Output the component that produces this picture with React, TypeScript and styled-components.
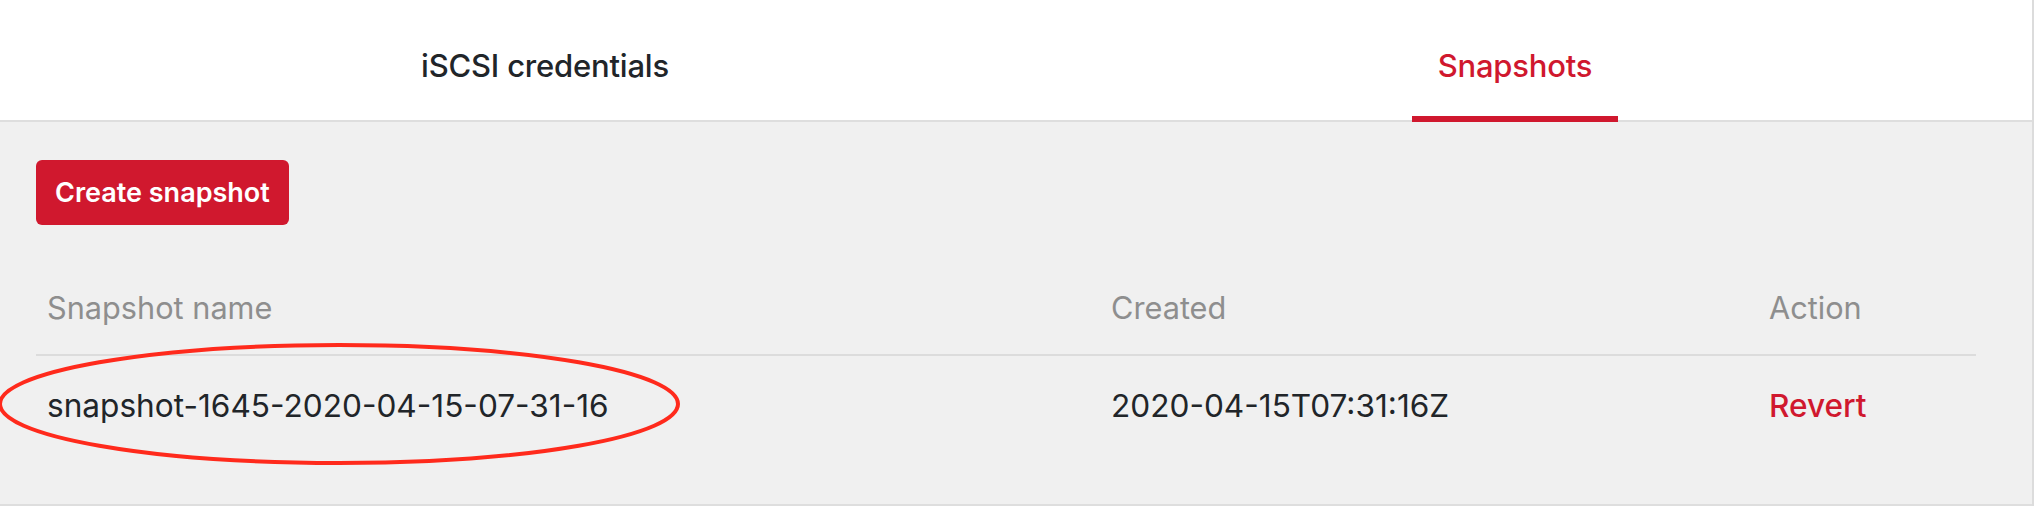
import React from 'react';
import styled, { createGlobalStyle } from 'styled-components';

const GlobalStyle = createGlobalStyle`
  html, body {
    margin: 0;
    padding: 0;
    background: #ffffff;
  }
  body {
    font-family: Inter, "Noto Sans", "Liberation Sans", sans-serif;
    color: #212529;
  }
  * {
    box-sizing: border-box;
  }
`;

const Frame = styled.div`
  width: 2034px;
  border-right: 2px solid #dcdcdc;
`;

const TabBar = styled.nav`
  display: flex;
  height: 122px;
  padding: 0 32px 0 60px;
  border-bottom: 2px solid #dedede;
  background: #ffffff;
`;

const TabCell = styled.div`
  flex: 1;
  display: flex;
  justify-content: center;
`;

const TabLabel = styled.a<{ $active?: boolean }>`
  display: flex;
  align-items: center;
  height: 122px;
  padding: 14px 26px 0;
  margin-bottom: -2px;
  font-size: 31px;
  font-weight: 500;
  letter-spacing: -0.2px;
  color: ${({ $active }) => ($active ? '#d0182e' : '#212529')};
  border-bottom: 6px solid ${({ $active }) => ($active ? '#d0182e' : 'transparent')};
  cursor: pointer;
`;

const Panel = styled.section`
  position: relative;
  background: #f0f0f0;
  padding: 38px 56px 58px 36px;
  border-bottom: 2px solid #dedede;
`;

const PrimaryButton = styled.button`
  display: block;
  height: 65px;
  padding: 0 19px;
  border: none;
  border-radius: 6px;
  background: #d0182e;
  color: #ffffff;
  font-family: inherit;
  font-size: 27px;
  font-weight: 600;
  cursor: pointer;
`;

const Table = styled.div`
  margin-top: 28px;
`;

const Row = styled.div<{ $head?: boolean }>`
  display: grid;
  grid-template-columns: 1064px 658px 1fr;
  padding: ${({ $head }) => ($head ? '32px 0 24px' : '27px 0 17px')};
  border-bottom: ${({ $head }) => ($head ? '2px solid #dcdcdc' : 'none')};
`;

const HeadCell = styled.div`
  padding-left: 11px;
  font-size: 30.7px;
  line-height: 45px;
  color: #8e8e8e;
`;

const Cell = styled.div`
  padding-left: 11px;
  font-size: 31.6px;
  line-height: 46px;
  color: #212529;
`;

const ActionLink = styled.a`
  font-weight: 500;
  color: #d0182e;
  cursor: pointer;
`;

const Marker = styled.svg`
  position: absolute;
  left: 0;
  top: 220px;
  overflow: visible;
`;

const snapshots = [
  { name: 'snapshot-1645-2020-04-15-07-31-16', created: '2020-04-15T07:31:16Z' },
];

const App: React.FC = () => {
  return (
    <>
      <GlobalStyle />
      <Frame>
        <TabBar>
          <TabCell>
            <TabLabel>iSCSI credentials</TabLabel>
          </TabCell>
          <TabCell>
            <TabLabel $active>Snapshots</TabLabel>
          </TabCell>
        </TabBar>
        <Panel>
          <PrimaryButton>Create snapshot</PrimaryButton>
          <Table>
            <Row $head>
              <HeadCell>Snapshot name</HeadCell>
              <HeadCell>Created</HeadCell>
              <HeadCell>Action</HeadCell>
            </Row>
            {snapshots.map((snap) => (
              <Row key={snap.name}>
                <Cell>{snap.name}</Cell>
                <Cell>{snap.created}</Cell>
                <Cell>
                  <ActionLink>Revert</ActionLink>
                </Cell>
              </Row>
            ))}
          </Table>
          <Marker width="682" height="124" viewBox="0 0 682 124">
            <ellipse cx="339" cy="62" rx="339" ry="59" fill="none" stroke="#ff2a1c" strokeWidth="4" />
          </Marker>
        </Panel>
      </Frame>
    </>
  );
};

export default App;
